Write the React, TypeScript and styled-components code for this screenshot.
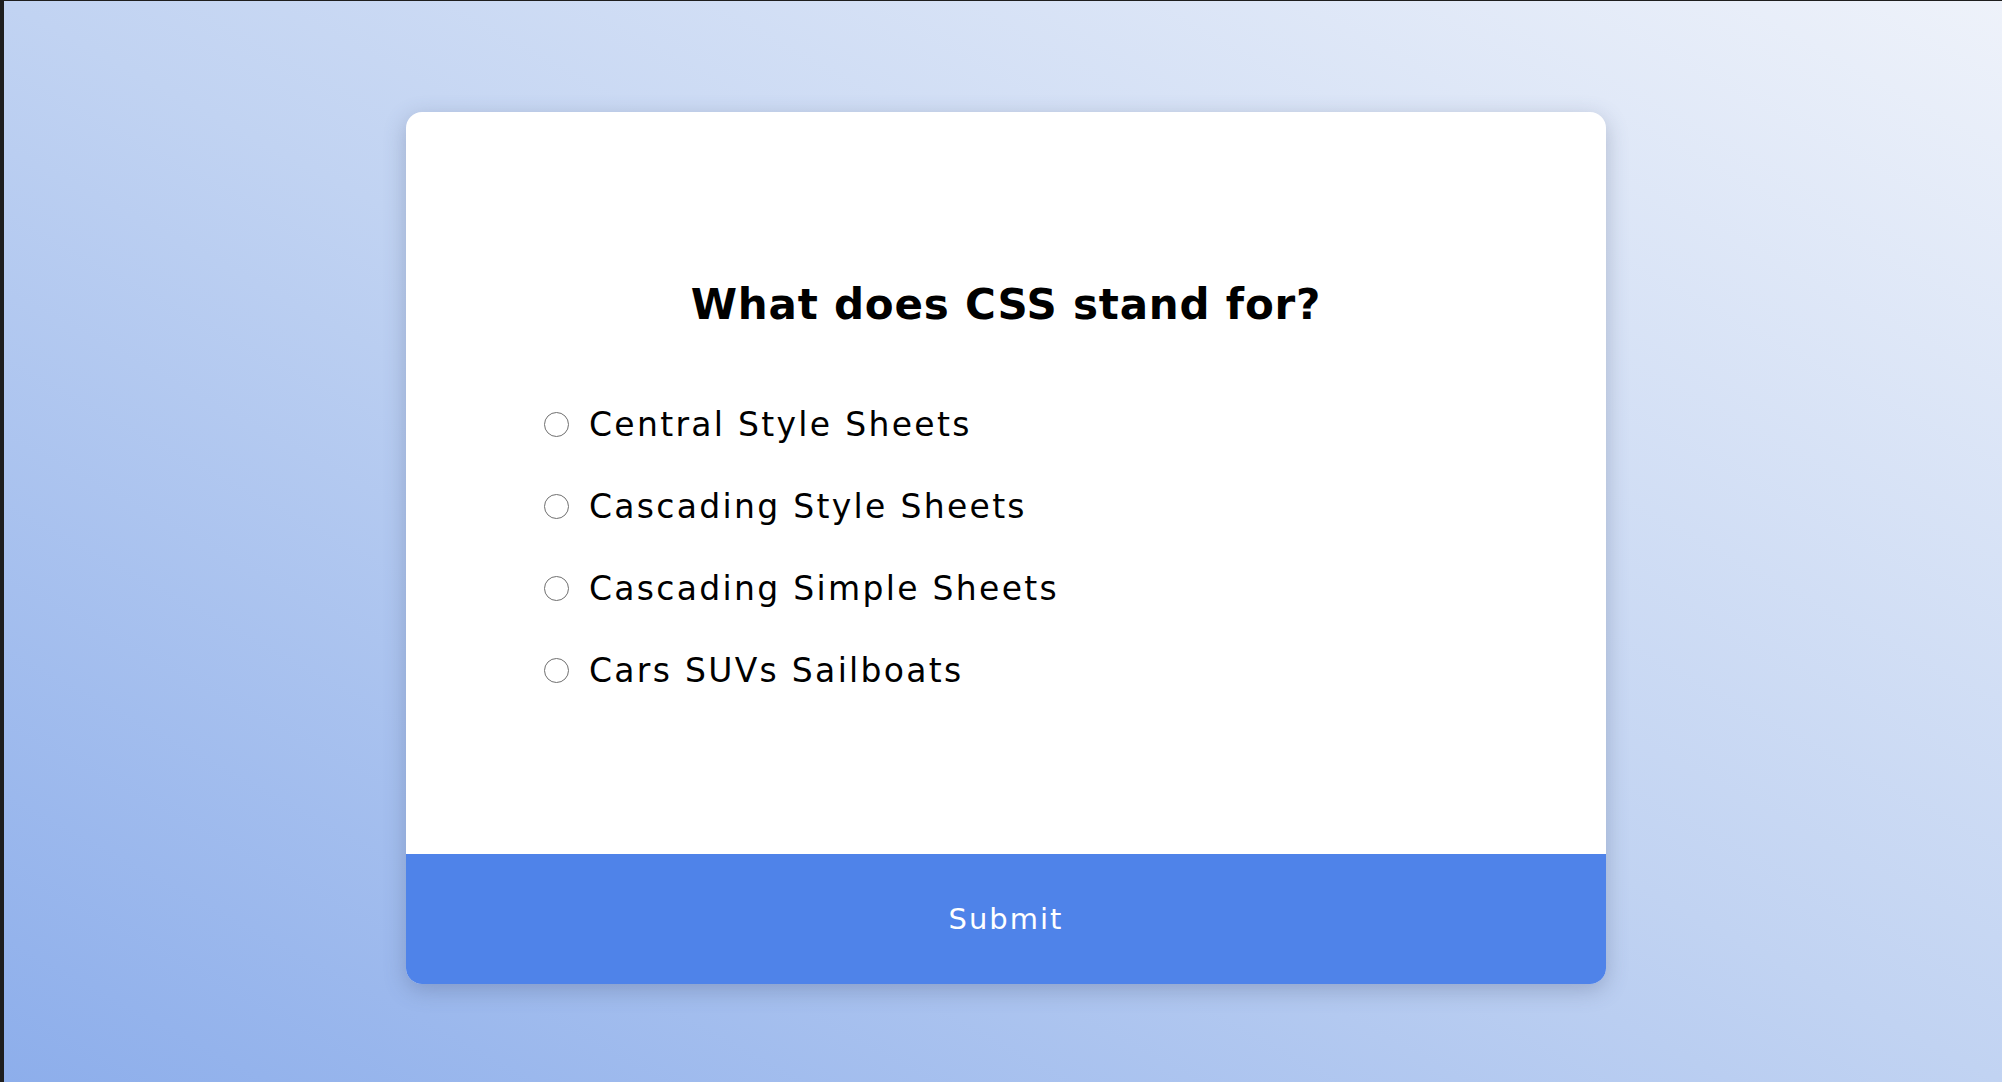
import React from "react";
import styled, { createGlobalStyle } from "styled-components";

const GlobalStyle = createGlobalStyle`
  html, body {
    margin: 0;
    padding: 0;
    height: 100%;
  }
  body {
    font-family: "DejaVu Sans", "Noto Sans", sans-serif;
    overflow: hidden;
  }
  #root {
    height: 100%;
  }
`;

const Page = styled.div`
  box-sizing: border-box;
  width: 2002px;
  height: 1082px;
  border-left: 4px solid #1e1e1e;
  border-top: 1px solid #1e1e1e;
  background: linear-gradient(to top right, #8daeeb 0%, #c1d3f2 50%, #eef2fa 100%);
  display: flex;
  justify-content: center;
  align-items: flex-start;
  padding-top: 111px;
  padding-left: 6px;
`;

const Card = styled.form`
  width: 1200px;
  height: 872px;
  background: #ffffff;
  border-radius: 16px;
  box-shadow: 0 6px 22px rgba(70, 85, 120, 0.32);
  display: flex;
  flex-direction: column;
  overflow: hidden;
`;

const Body = styled.div`
  flex: 1;
  padding: 168px 138px 0;
  display: flex;
  flex-direction: column;
`;

const Title = styled.h2`
  margin: 0;
  text-align: center;
  font-family: "DejaVu Sans", sans-serif;
  font-weight: 700;
  font-size: 42px;
  line-height: 50px;
  letter-spacing: 0.8px;
  color: #000;
`;

const OptionList = styled.ul`
  list-style: none;
  margin: 69px 0 0;
  padding: 0;
  display: flex;
  flex-direction: column;
  gap: 32px;
`;

const OptionRow = styled.li`
  height: 50px;
  display: flex;
  align-items: center;
`;

const OptionLabel = styled.label`
  display: flex;
  align-items: center;
  gap: 20px;
  font-family: "DejaVu Sans", sans-serif;
  font-size: 33px;
  letter-spacing: 2.3px;
  color: #000;
  cursor: pointer;
`;

const Radio = styled.input.attrs({ type: "radio" })`
  appearance: none;
  margin: 0;
  width: 25px;
  height: 25px;
  border-radius: 50%;
  border: 1.8px solid #6f6f6f;
  background: #fff;
  box-sizing: border-box;
  flex-shrink: 0;
`;

const SubmitButton = styled.button`
  height: 130px;
  width: 100%;
  border: none;
  margin: 0;
  background: #4f83e9;
  color: #ffffff;
  font-family: "DejaVu Sans", sans-serif;
  font-size: 29px;
  letter-spacing: 2px;
  cursor: pointer;
  display: flex;
  align-items: center;
  justify-content: center;
  padding: 0;
`;

const options = [
  "Central Style Sheets",
  "Cascading Style Sheets",
  "Cascading Simple Sheets",
  "Cars SUVs Sailboats",
];

export default function App() {
  return (
    <>
      <GlobalStyle />
      <Page>
        <Card onSubmit={(e) => e.preventDefault()}>
          <Body>
            <Title>What does CSS stand for?</Title>
            <OptionList>
              {options.map((o) => (
                <OptionRow key={o}>
                  <OptionLabel>
                    <Radio name="answer" value={o} />
                    {o}
                  </OptionLabel>
                </OptionRow>
              ))}
            </OptionList>
          </Body>
          <SubmitButton type="submit">Submit</SubmitButton>
        </Card>
      </Page>
    </>
  );
}
